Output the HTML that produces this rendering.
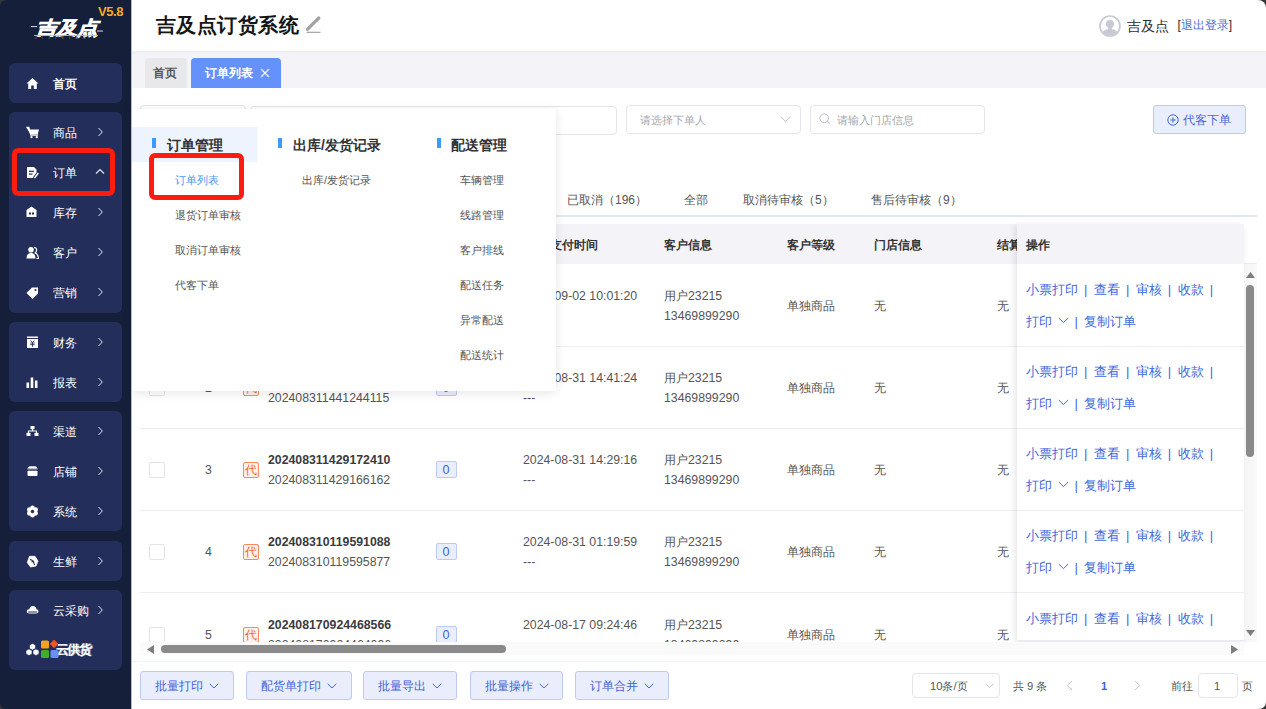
<!DOCTYPE html>
<html><head><meta charset="utf-8">
<style>
*{margin:0;padding:0;box-sizing:border-box}
html,body{width:1266px;height:709px;overflow:hidden;background:#363636}
body{font-family:"Liberation Sans",sans-serif;position:relative;color:#555}
.win{position:absolute;left:0;top:0;width:1266px;height:709px;border-radius:6px 8px 7px 6px;overflow:hidden;background:transparent}
.a{position:absolute;white-space:nowrap}
/* sidebar */
.side{position:absolute;left:0;top:0;width:131px;height:709px;background:#161f3a}
.grp{position:absolute;left:9px;width:113px;background:#232e5b;border-radius:6px}
.stx{font-size:11.8px;line-height:16px;color:#fff;margin-top:1px}
/* header */
.hdr{position:absolute;left:131px;top:0;width:1135px;height:51px;background:#fff}
.tabs{position:absolute;left:131px;top:51px;width:1135px;height:37px;background:#f4f4f8;box-shadow:inset 0 2px 2px rgba(0,0,0,0.025)}
.main{position:absolute;left:131px;top:88px;width:1135px;height:621px;background:#fff}
.inp{position:absolute;height:29px;border:1px solid #e3e5ec;border-radius:4px;background:#fff}
.ph{position:absolute;font-size:10.9px;color:#a6a7ad;line-height:14px}
.btnb{position:absolute;height:29px;border:1px solid #bccaf5;background:#e9edfc;border-radius:3px;color:#4262d6;font-size:12px}
.stab{top:193px;font-size:12px;line-height:14px;color:#555}
.th{top:238px;font-size:12px;line-height:14px;font-weight:bold;color:#333}
.td{font-size:12.3px;line-height:14px;color:#555;margin-top:1px}
.cb{width:16px;height:16px;border:1px solid #e2e4ea;border-radius:2px;background:#fff}
.dai{width:16px;height:16px;border:1px solid #f58a5a;background:#fef1eb;color:#f26a2c;font-size:12px;line-height:14px;text-align:center;border-radius:2px}
.zero{width:21px;height:17px;border:1px solid #bccaf5;background:#e9edfc;color:#3d63dd;font-size:12.5px;line-height:17px;text-align:center;border-radius:2px;padding-right:1px}
.op{font-size:13.4px;line-height:16px;color:#4268dc;margin-top:0.5px}
.op i{font-style:normal;margin:0 6.5px 0 6px;font-size:13px}
.pg{font-size:11.2px;line-height:14px;color:#555}
.ptl{font-size:14px;line-height:16px;font-weight:bold;color:#333;margin-top:1px}
.pit{font-size:10.8px;line-height:14px;color:#555}
</style></head><body>
<div class="win">

<!-- SIDEBAR -->
<div class="side">
  <div class="a" style="left:98px;top:4px;font-size:13px;line-height:15px;font-weight:bold;color:#f7aa1e;letter-spacing:-0.4px">V5.8</div>
  <svg class="a" style="left:30px;top:14px" width="76" height="28" viewBox="0 0 76 28">
    <g transform="translate(0 1.5) matrix(1 0 -0.3 0.86 6 0)">
      <text x="6" y="21" font-size="21" font-weight="bold" fill="#fff" stroke="#fff" stroke-width="1" textLength="62" lengthAdjust="spacingAndGlyphs">吉及点</text>
    </g>
    <rect x="1" y="12" width="6" height="1.1" fill="#c8cbd8"/><rect x="67" y="16.5" width="6" height="1.1" fill="#c8cbd8"/>
    <rect x="4" y="21" width="64" height="0.9" fill="#b5b9c8"/>
    <text x="5" y="24.8" font-size="2.8" fill="#9aa" letter-spacing="5.6">JIJIDIAN</text>
  </svg>
  <div class="grp" style="top:63px;height:40px"></div>
  <svg class="a" style="left:26px;top:77px" width="13" height="13" viewBox="-0.5 -0.5 13 13"><path d="M6 0.5 L12 6 L10.3 6 L10.3 11.5 L7.3 11.5 L7.3 8 L4.7 8 L4.7 11.5 L1.7 11.5 L1.7 6 L0 6 Z" fill="#fff"/></svg>
  <div class="a stx" style="left:52.5px;top:75px;font-weight:bold;">首页</div>
  <div class="grp" style="top:112px;height:201px"></div>
  <svg class="a" style="left:26px;top:126px" width="13" height="13" viewBox="-0.5 -0.5 13 13"><path d="M0 1 L2.3 1 L3.3 3 L12.5 3 L11.2 8 L4 8 Z" fill="#fff"/><path d="M0 1 L2.3 1 L4.4 8.6 L11.5 8.6" fill="none" stroke="#fff" stroke-width="1.3"/><circle cx="5" cy="10.6" r="1.2" fill="#fff"/><circle cx="10.3" cy="10.6" r="1.2" fill="#fff"/></svg>
  <div class="a stx" style="left:52.5px;top:124px;">商品</div>
  <svg class="a" style="left:97px;top:127px" width="7" height="10" viewBox="0 0 7 10"><path d="M1.5 1 L5.3 5 L1.5 9" fill="none" stroke="#e4e6ee" stroke-width="1"/></svg>
  <svg class="a" style="left:26px;top:166px" width="13" height="13" viewBox="-0.5 -0.5 13 13"><path d="M1 0.5 L7.5 0.5 L10 3 L10 6 L7 10 L6.5 11.5 L1 11.5 Q0.5 11.5 0.5 11 L0.5 1 Q0.5 0.5 1 0.5 Z" fill="#fff"/><rect x="2.5" y="4.2" width="5" height="1.2" fill="#222c58"/><rect x="2.5" y="7" width="3.5" height="1.2" fill="#222c58"/><path d="M8 11.5 L11.8 6.5" stroke="#fff" stroke-width="1.5"/></svg>
  <div class="a stx" style="left:52.5px;top:164px;">订单</div>
  <svg class="a" style="left:95px;top:168px" width="10" height="7" viewBox="0 0 10 7"><path d="M1 5.5 L5 1.5 L9 5.5" fill="none" stroke="#e8eaf2" stroke-width="1.1"/></svg>
  <svg class="a" style="left:26px;top:206px" width="13" height="13" viewBox="-0.5 -0.5 13 13"><path d="M5 0 L10 3.5 L10 10.5 L0 10.5 L0 3.5 Z" fill="#fff"/><rect x="2.5" y="6" width="2" height="2" fill="#222c58"/><rect x="5.5" y="6" width="2" height="2" fill="#222c58"/></svg>
  <div class="a stx" style="left:52.5px;top:204px;">库存</div>
  <svg class="a" style="left:97px;top:207px" width="7" height="10" viewBox="0 0 7 10"><path d="M1.5 1 L5.3 5 L1.5 9" fill="none" stroke="#e4e6ee" stroke-width="1"/></svg>
  <svg class="a" style="left:26px;top:246px" width="13" height="13" viewBox="-0.5 -0.5 13 13"><circle cx="4.5" cy="3.2" r="2.8" fill="#fff"/><path d="M0 12 Q0 6.5 4.5 6.5 Q9 6.5 9 12 Z" fill="#fff"/><path d="M7.5 0.8 Q10.5 1.2 10 4.5 Q9.5 6 8.3 6.3 Q11.5 7 12 12 L10 12" fill="none" stroke="#fff" stroke-width="1.2"/></svg>
  <div class="a stx" style="left:52.5px;top:244px;">客户</div>
  <svg class="a" style="left:97px;top:247px" width="7" height="10" viewBox="0 0 7 10"><path d="M1.5 1 L5.3 5 L1.5 9" fill="none" stroke="#e4e6ee" stroke-width="1"/></svg>
  <svg class="a" style="left:26px;top:286px" width="13" height="13" viewBox="-0.5 -0.5 13 13"><path d="M5.5 1 L11.5 1 L11.5 7 L6 12.5 L0 6.5 Z" fill="#fff"/><circle cx="9" cy="3.5" r="1" fill="#222c58"/></svg>
  <div class="a stx" style="left:52.5px;top:284px;">营销</div>
  <svg class="a" style="left:97px;top:287px" width="7" height="10" viewBox="0 0 7 10"><path d="M1.5 1 L5.3 5 L1.5 9" fill="none" stroke="#e4e6ee" stroke-width="1"/></svg>
  <div class="grp" style="top:322px;height:80px"></div>
  <svg class="a" style="left:26px;top:336px" width="13" height="13" viewBox="-0.5 -0.5 13 13"><rect x="0.5" y="0" width="11" height="1.5" fill="#fff"/><rect x="0.5" y="2.5" width="11" height="9" fill="#fff"/><path d="M4.2 4 L6 6 L7.8 4 M3.8 6.5 H8.2 M3.8 8.2 H8.2 M6 6 V10.3" stroke="#222c58" stroke-width="0.9" fill="none"/></svg>
  <div class="a stx" style="left:52.5px;top:334px;">财务</div>
  <svg class="a" style="left:97px;top:337px" width="7" height="10" viewBox="0 0 7 10"><path d="M1.5 1 L5.3 5 L1.5 9" fill="none" stroke="#e4e6ee" stroke-width="1"/></svg>
  <svg class="a" style="left:26px;top:376px" width="13" height="13" viewBox="-0.5 -0.5 13 13"><rect x="0" y="6" width="2.6" height="5.5" fill="#fff"/><rect x="4.2" y="1" width="2.6" height="10.5" fill="#fff"/><rect x="8.4" y="4" width="2.6" height="7.5" fill="#fff"/></svg>
  <div class="a stx" style="left:52.5px;top:374px;">报表</div>
  <svg class="a" style="left:97px;top:377px" width="7" height="10" viewBox="0 0 7 10"><path d="M1.5 1 L5.3 5 L1.5 9" fill="none" stroke="#e4e6ee" stroke-width="1"/></svg>
  <div class="grp" style="top:411px;height:120px"></div>
  <svg class="a" style="left:26px;top:425px" width="13" height="13" viewBox="-0.5 -0.5 13 13"><rect x="4" y="0.5" width="4" height="3.2" fill="#fff"/><path d="M6 3.5 V5.5 M2 7.5 V5.5 H10 V7.5" stroke="#fff" stroke-width="1.2" fill="none"/><rect x="0" y="7.3" width="4" height="3.2" fill="#fff"/><rect x="8" y="7.3" width="4" height="3.2" fill="#fff"/></svg>
  <div class="a stx" style="left:52.5px;top:423px;">渠道</div>
  <svg class="a" style="left:97px;top:426px" width="7" height="10" viewBox="0 0 7 10"><path d="M1.5 1 L5.3 5 L1.5 9" fill="none" stroke="#e4e6ee" stroke-width="1"/></svg>
  <svg class="a" style="left:26px;top:465px" width="13" height="13" viewBox="-0.5 -0.5 13 13"><path d="M1 4.2 Q1 0.8 3.8 0.8 H8.2 Q11 0.8 11 4.2 Z" fill="#fff"/><rect x="1" y="5.3" width="10" height="5.2" rx="0.8" fill="#fff"/><rect x="1" y="3.2" width="10" height="0.9" fill="#232e5b"/></svg>
  <div class="a stx" style="left:52.5px;top:463px;">店铺</div>
  <svg class="a" style="left:97px;top:466px" width="7" height="10" viewBox="0 0 7 10"><path d="M1.5 1 L5.3 5 L1.5 9" fill="none" stroke="#e4e6ee" stroke-width="1"/></svg>
  <svg class="a" style="left:26px;top:505px" width="13" height="13" viewBox="-0.5 -0.5 13 13"><circle cx="9.20" cy="7.85" r="2.3" fill="#fff"/><circle cx="6.00" cy="9.70" r="2.3" fill="#fff"/><circle cx="2.80" cy="7.85" r="2.3" fill="#fff"/><circle cx="2.80" cy="4.15" r="2.3" fill="#fff"/><circle cx="6.00" cy="2.30" r="2.3" fill="#fff"/><circle cx="9.20" cy="4.15" r="2.3" fill="#fff"/><circle cx="6" cy="6" r="3.8" fill="#fff"/><circle cx="6" cy="6" r="1.7" fill="#232e5b"/></svg>
  <div class="a stx" style="left:52.5px;top:503px;">系统</div>
  <svg class="a" style="left:97px;top:506px" width="7" height="10" viewBox="0 0 7 10"><path d="M1.5 1 L5.3 5 L1.5 9" fill="none" stroke="#e4e6ee" stroke-width="1"/></svg>
  <div class="grp" style="top:541px;height:40px"></div>
  <svg class="a" style="left:26px;top:555px" width="13" height="13" viewBox="-0.5 -0.5 13 13"><path d="M3 0.8 L8.5 0.8 L11.5 5.5 L9.5 10.5 L4 11.5 L0.8 7 Z" fill="#fff" stroke="#fff" stroke-width="0.8" stroke-linejoin="round"/><path d="M3.5 4 Q7 4.5 8 9.5 M5 6.5 L7.5 5.5" stroke="#232e5b" stroke-width="1.1" fill="none"/></svg>
  <div class="a stx" style="left:52.5px;top:553px;">生鲜</div>
  <svg class="a" style="left:97px;top:556px" width="7" height="10" viewBox="0 0 7 10"><path d="M1.5 1 L5.3 5 L1.5 9" fill="none" stroke="#e4e6ee" stroke-width="1"/></svg>
  <div class="grp" style="top:590px;height:80px"></div>
  <svg class="a" style="left:26px;top:604px" width="13" height="13" viewBox="-0.5 -0.5 13 13"><path d="M3 9 Q0 9 0.3 6.5 Q0.7 4.5 2.8 4.7 Q3.5 1.5 6.5 1.5 Q9.5 1.7 10 4.7 Q12.3 5 12 7.2 Q11.8 9 9.5 9 Z" fill="#fff"/><rect x="1.5" y="7" width="9" height="1" fill="#222c58"/></svg>
  <div class="a stx" style="left:52.5px;top:602px;">云采购</div>
  <svg class="a" style="left:97px;top:605px" width="7" height="10" viewBox="0 0 7 10"><path d="M1.5 1 L5.3 5 L1.5 9" fill="none" stroke="#e4e6ee" stroke-width="1"/></svg>
  <svg class="a" style="left:25px;top:643px" width="15" height="14" viewBox="0 0 15 14"><g fill="#fff" stroke="#232e5b" stroke-width="0.6"><path d="M7.5 0.5 L10.5 2 L10.5 5.5 L7.5 7 L4.5 5.5 L4.5 2 Z"/><path d="M4 6 L7 7.5 L7 11 L4 12.5 L1 11 L1 7.5 Z"/><path d="M11 6 L14 7.5 L14 11 L11 12.5 L8 11 L8 7.5 Z"/></g></svg>
  <div class="a" style="left:56px;top:642px;font-size:12.5px;line-height:16px;font-weight:bold;color:#fff;letter-spacing:-1.6px">云供货</div>
  <div class="a" style="left:57px;top:642px;font-size:12.5px;line-height:16px;font-weight:bold;color:#fff;opacity:0.55;letter-spacing:-1.6px">云俱货</div>
  <svg class="a" style="left:41px;top:640px" width="18" height="18" viewBox="0 0 18 18"><rect x="0" y="0.5" width="8" height="8" rx="1.5" fill="#f7a21b"/><rect x="10" y="0.8" width="6.2" height="6.2" rx="1" fill="#f2551c" transform="rotate(45 13.1 3.9)"/><rect x="0" y="10" width="8" height="8" rx="1.5" fill="#3fae2a"/><rect x="9.5" y="10" width="8" height="8" rx="1.5" fill="#6b8ef7"/></svg>
  <div class="a" style="left:11.5px;top:148px;width:103px;height:48px;border:5px solid #fd1d10;border-radius:6px"></div>
</div>
<!-- HEADER -->
<div class="hdr"></div>
<div class="a" style="left:155.5px;top:13px;font-size:20.3px;line-height:24px;font-weight:bold;color:#151515;letter-spacing:0.5px">吉及点订货系统</div>

<div class="tabs"></div>
<div class="a" style="left:145px;top:58px;width:42px;height:30px;background:#e8e8ea;border-radius:4px 4px 0 0"></div>
<div class="a" style="left:153px;top:66px;font-size:12px;line-height:14px;font-weight:bold;color:#555">首页</div>
<div class="a" style="left:191px;top:58px;width:90px;height:30px;background:#6591fb;border-radius:4px 4px 0 0"></div>
<div class="a" style="left:205px;top:66px;font-size:12px;line-height:14px;font-weight:bold;color:#fff">订单列表</div>

<div class="main"></div>
<svg class="a" style="left:305px;top:15px" width="17" height="19" viewBox="0 0 17 19"><path d="M2.6 14.2 L10.6 6.2" stroke="#a3a3a3" stroke-width="3.3" stroke-linecap="round"/><path d="M11.8 5 L13.8 3" stroke="#a3a3a3" stroke-width="3.3" stroke-linecap="round"/><path d="M1.5 15.5 L2.6 14.2" stroke="#a3a3a3" stroke-width="1.5"/><rect x="1.5" y="16.7" width="14" height="1.3" fill="#a9a9a9"/></svg>
<svg class="a" style="left:1098.5px;top:15px" width="22" height="22" viewBox="0 0 22 22"><defs><clipPath id="cc"><circle cx="11" cy="11" r="9.5"/></clipPath></defs><circle cx="11" cy="11" r="10" fill="none" stroke="#c7cad5" stroke-width="1.7"/><g clip-path="url(#cc)" fill="#c7cad5"><circle cx="11" cy="9" r="4.1"/><path d="M9.3 12 L12.7 12 L13 14.3 Q19.5 14.8 20 22 L2 22 Q2.5 14.8 9 14.3 Z"/></g></svg>
<div class="a" style="left:1126.5px;top:18px;font-size:14px;line-height:16px;color:#2b2b2b">吉及点</div>
<div class="a" style="left:1177.5px;top:18px;font-size:12px;line-height:14px;color:#2b2b2b">[<span style="color:#4d6fd6">退出登录</span>]</div>
<svg class="a" style="left:260px;top:68px" width="10" height="10" viewBox="0 0 10 10"><path d="M1 1 L9 9 M9 1 L1 9" stroke="#fff" stroke-width="1.1"/></svg>
<div class="inp" style="left:140px;top:105px;width:106px"></div>
<div class="inp" style="left:250px;top:106px;width:367px"></div>
<div class="inp" style="left:626px;top:105px;width:175px"></div>
<div class="ph" style="left:640px;top:113px">请选择下单人</div>
<svg class="a" style="left:780px;top:116px" width="11" height="7" viewBox="0 0 11 7"><path d="M0.8 1 L5.5 5.6 L10.2 1" fill="none" stroke="#c0c4cc" stroke-width="1"/></svg>
<div class="inp" style="left:810px;top:105px;width:175px"></div>
<svg class="a" style="left:819px;top:113px" width="12" height="12" viewBox="0 0 12 12"><circle cx="5.2" cy="5.2" r="4.3" fill="none" stroke="#b8bcc6" stroke-width="1"/><path d="M8.3 8.3 L10.8 10.8" stroke="#b8bcc6" stroke-width="1"/></svg>
<div class="ph" style="left:837px;top:113px">请输入门店信息</div>
<div class="btnb" style="left:1153px;top:105px;width:93px"></div>
<svg class="a" style="left:1167px;top:114px" width="12" height="12" viewBox="0 0 12 12"><circle cx="6" cy="6" r="5.2" fill="none" stroke="#4766d8" stroke-width="1"/><path d="M6 3.3 V8.7 M3.3 6 H8.7" stroke="#4766d8" stroke-width="1"/></svg>
<div class="a" style="left:1183px;top:113px;font-size:12px;line-height:14px;color:#4766d8">代客下单</div>
<div class="a" style="left:140px;top:215px;width:1117px;height:2px;background:#e3e7f0"></div>
<div class="a stab" style="left:567px">已取消（196）</div>
<div class="a stab" style="left:684px">全部</div>
<div class="a stab" style="left:743px">取消待审核（5）</div>
<div class="a stab" style="left:871px">售后待审核（9）</div>
<div class="a" style="left:140px;top:224px;width:1104px;height:40px;background:#f4f4f8"></div>
<div class="a th" style="left:523px">下单/支付时间</div>
<div class="a th" style="left:664px">客户信息</div>
<div class="a th" style="left:787px">客户等级</div>
<div class="a th" style="left:874px">门店信息</div>
<div class="a th" style="left:997px">结算方式</div>
<div class="a" style="left:140px;top:264px;width:1104px;height:378px;overflow:hidden">
<div class="a" style="left:0;top:82px;width:1104px;height:1px;background:#ebeef5"></div>
<div class="a cb" style="left:9px;top:34px"></div>
<div class="a td" style="left:64px;top:34px;width:9px;text-align:center">1</div>
<div class="a dai" style="left:103px;top:34px">代</div>
<div class="a td" style="left:128px;top:24px;font-weight:bold;color:#3b3b3b">202409021001201234</div>
<div class="a td" style="left:128px;top:44px">202409021001205678</div>
<div class="a zero" style="left:296px;top:33px">0</div>
<div class="a td" style="left:383px;top:24px">2024-09-02 10:01:20</div>
<div class="a td" style="left:383px;top:44px">---</div>
<div class="a td" style="left:524px;top:24px">用户23215</div>
<div class="a td" style="left:524px;top:44px">13469899290</div>
<div class="a td" style="left:647px;top:34px">单独商品</div>
<div class="a td" style="left:734px;top:34px">无</div>
<div class="a td" style="left:857px;top:34px">无</div>
<div class="a" style="left:0;top:164px;width:1104px;height:1px;background:#ebeef5"></div>
<div class="a cb" style="left:9px;top:116px"></div>
<div class="a td" style="left:64px;top:116px;width:9px;text-align:center">2</div>
<div class="a dai" style="left:103px;top:116px">代</div>
<div class="a td" style="left:128px;top:106px;font-weight:bold;color:#3b3b3b">202408311441244111</div>
<div class="a td" style="left:128px;top:126px">202408311441244115</div>
<div class="a zero" style="left:296px;top:115px">0</div>
<div class="a td" style="left:383px;top:106px">2024-08-31 14:41:24</div>
<div class="a td" style="left:383px;top:126px">---</div>
<div class="a td" style="left:524px;top:106px">用户23215</div>
<div class="a td" style="left:524px;top:126px">13469899290</div>
<div class="a td" style="left:647px;top:116px">单独商品</div>
<div class="a td" style="left:734px;top:116px">无</div>
<div class="a td" style="left:857px;top:116px">无</div>
<div class="a" style="left:0;top:246px;width:1104px;height:1px;background:#ebeef5"></div>
<div class="a cb" style="left:9px;top:198px"></div>
<div class="a td" style="left:64px;top:198px;width:9px;text-align:center">3</div>
<div class="a dai" style="left:103px;top:198px">代</div>
<div class="a td" style="left:128px;top:188px;font-weight:bold;color:#3b3b3b">202408311429172410</div>
<div class="a td" style="left:128px;top:208px">202408311429166162</div>
<div class="a zero" style="left:296px;top:197px">0</div>
<div class="a td" style="left:383px;top:188px">2024-08-31 14:29:16</div>
<div class="a td" style="left:383px;top:208px">---</div>
<div class="a td" style="left:524px;top:188px">用户23215</div>
<div class="a td" style="left:524px;top:208px">13469899290</div>
<div class="a td" style="left:647px;top:198px">单独商品</div>
<div class="a td" style="left:734px;top:198px">无</div>
<div class="a td" style="left:857px;top:198px">无</div>
<div class="a" style="left:0;top:328px;width:1104px;height:1px;background:#ebeef5"></div>
<div class="a cb" style="left:9px;top:280px"></div>
<div class="a td" style="left:64px;top:280px;width:9px;text-align:center">4</div>
<div class="a dai" style="left:103px;top:280px">代</div>
<div class="a td" style="left:128px;top:270px;font-weight:bold;color:#3b3b3b">202408310119591088</div>
<div class="a td" style="left:128px;top:290px">202408310119595877</div>
<div class="a zero" style="left:296px;top:279px">0</div>
<div class="a td" style="left:383px;top:270px">2024-08-31 01:19:59</div>
<div class="a td" style="left:383px;top:290px">---</div>
<div class="a td" style="left:524px;top:270px">用户23215</div>
<div class="a td" style="left:524px;top:290px">13469899290</div>
<div class="a td" style="left:647px;top:280px">单独商品</div>
<div class="a td" style="left:734px;top:280px">无</div>
<div class="a td" style="left:857px;top:280px">无</div>
<div class="a" style="left:0;top:411px;width:1104px;height:1px;background:#ebeef5"></div>
<div class="a cb" style="left:9px;top:363px"></div>
<div class="a td" style="left:64px;top:363px;width:9px;text-align:center">5</div>
<div class="a dai" style="left:103px;top:363px">代</div>
<div class="a td" style="left:128px;top:353px;font-weight:bold;color:#3b3b3b">202408170924468566</div>
<div class="a td" style="left:128px;top:373px">202408170924464096</div>
<div class="a zero" style="left:296px;top:362px">0</div>
<div class="a td" style="left:383px;top:353px">2024-08-17 09:24:46</div>
<div class="a td" style="left:383px;top:373px">---</div>
<div class="a td" style="left:524px;top:353px">用户23215</div>
<div class="a td" style="left:524px;top:373px">13469899290</div>
<div class="a td" style="left:647px;top:363px">单独商品</div>
<div class="a td" style="left:734px;top:363px">无</div>
<div class="a td" style="left:857px;top:363px">无</div>
</div>
<div class="a" style="left:1017px;top:224px;width:227px;height:417px;background:#fff;box-shadow:-4px 0 6px rgba(0,0,0,0.05), 0 3px 6px rgba(0,0,0,0.07);overflow:hidden;border-bottom:1px solid #e6ebf4">
<div class="a" style="left:0;top:0;width:227px;height:40px;background:#f4f4f8"></div>
<div class="a th" style="left:9px;top:14px">操作</div>
<div class="a" style="left:0;top:122px;width:227px;height:1px;background:#ebeef5"></div>
<div class="a op" style="left:9px;top:57px">小票打印<i>|</i>查看<i>|</i>审核<i>|</i>收款<i>|</i></div>
<div class="a op" style="left:9px;top:89px">打印<svg width="11" height="7" viewBox="0 0 11 7" style="margin:0 0 2px 5.5px"><path d="M0.8 1 L5.5 5.6 L10.2 1" fill="none" stroke="#4268dc" stroke-width="1"/></svg><i>|</i>复制订单</div>
<div class="a" style="left:0;top:204px;width:227px;height:1px;background:#ebeef5"></div>
<div class="a op" style="left:9px;top:139px">小票打印<i>|</i>查看<i>|</i>审核<i>|</i>收款<i>|</i></div>
<div class="a op" style="left:9px;top:171px">打印<svg width="11" height="7" viewBox="0 0 11 7" style="margin:0 0 2px 5.5px"><path d="M0.8 1 L5.5 5.6 L10.2 1" fill="none" stroke="#4268dc" stroke-width="1"/></svg><i>|</i>复制订单</div>
<div class="a" style="left:0;top:286px;width:227px;height:1px;background:#ebeef5"></div>
<div class="a op" style="left:9px;top:221px">小票打印<i>|</i>查看<i>|</i>审核<i>|</i>收款<i>|</i></div>
<div class="a op" style="left:9px;top:253px">打印<svg width="11" height="7" viewBox="0 0 11 7" style="margin:0 0 2px 5.5px"><path d="M0.8 1 L5.5 5.6 L10.2 1" fill="none" stroke="#4268dc" stroke-width="1"/></svg><i>|</i>复制订单</div>
<div class="a" style="left:0;top:368px;width:227px;height:1px;background:#ebeef5"></div>
<div class="a op" style="left:9px;top:303px">小票打印<i>|</i>查看<i>|</i>审核<i>|</i>收款<i>|</i></div>
<div class="a op" style="left:9px;top:335px">打印<svg width="11" height="7" viewBox="0 0 11 7" style="margin:0 0 2px 5.5px"><path d="M0.8 1 L5.5 5.6 L10.2 1" fill="none" stroke="#4268dc" stroke-width="1"/></svg><i>|</i>复制订单</div>
<div class="a" style="left:0;top:451px;width:227px;height:1px;background:#ebeef5"></div>
<div class="a op" style="left:9px;top:386px">小票打印<i>|</i>查看<i>|</i>审核<i>|</i>收款<i>|</i></div>
<div class="a op" style="left:9px;top:418px">打印<svg width="11" height="7" viewBox="0 0 11 7" style="margin:0 0 2px 5.5px"><path d="M0.8 1 L5.5 5.6 L10.2 1" fill="none" stroke="#4268dc" stroke-width="1"/></svg><i>|</i>复制订单</div>
</div>
<div class="a" style="left:1244px;top:264px;width:13px;height:378px;background:linear-gradient(90deg,#f3f3f3,#f7f7f7 40%,#f9f9f9)"></div><div class="a" style="left:1244px;top:263px;width:13px;height:1px;background:#e6eaf2"></div>
<svg class="a" style="left:1246px;top:272px" width="9" height="6" viewBox="0 0 9 6"><path d="M4.5 0 L9 6 L0 6 Z" fill="#7d7d7d"/></svg>
<div class="a" style="left:1246px;top:285px;width:8px;height:172px;background:#8a8a8a;border-radius:4px"></div>
<svg class="a" style="left:1246px;top:630px" width="9" height="6" viewBox="0 0 9 6"><path d="M0 0 L9 0 L4.5 6 Z" fill="#7d7d7d"/></svg>
<div class="a" style="left:140px;top:642px;width:1104px;height:13px;background:#fafafa"></div>
<svg class="a" style="left:147px;top:645px" width="7" height="9" viewBox="0 0 7 9"><path d="M7 0 L7 9 L0 4.5 Z" fill="#7d7d7d"/></svg>
<div class="a" style="left:161px;top:645px;width:345px;height:8px;background:#8a8a8a;border-radius:4px"></div>
<svg class="a" style="left:1231px;top:645px" width="7" height="9" viewBox="0 0 7 9"><path d="M0 0 L7 4.5 L0 9 Z" fill="#7d7d7d"/></svg>
<div class="a" style="left:131px;top:661px;width:1135px;height:1px;background:#f1f2f5"></div>
<div class="btnb" style="left:140px;top:671px;width:94px;height:29px;text-align:center;line-height:27px;padding-top:1px">批量打印<svg width="10" height="6" viewBox="0 0 10 6" style="margin:0 0 1px 6px"><path d="M0.7 0.8 L5 5 L9.3 0.8" fill="none" stroke="#4766d8" stroke-width="1"/></svg></div>
<div class="btnb" style="left:246px;top:671px;width:106px;height:29px;text-align:center;line-height:27px;padding-top:1px">配货单打印<svg width="10" height="6" viewBox="0 0 10 6" style="margin:0 0 1px 6px"><path d="M0.7 0.8 L5 5 L9.3 0.8" fill="none" stroke="#4766d8" stroke-width="1"/></svg></div>
<div class="btnb" style="left:363px;top:671px;width:94px;height:29px;text-align:center;line-height:27px;padding-top:1px">批量导出<svg width="10" height="6" viewBox="0 0 10 6" style="margin:0 0 1px 6px"><path d="M0.7 0.8 L5 5 L9.3 0.8" fill="none" stroke="#4766d8" stroke-width="1"/></svg></div>
<div class="btnb" style="left:470px;top:671px;width:93px;height:29px;text-align:center;line-height:27px;padding-top:1px">批量操作<svg width="10" height="6" viewBox="0 0 10 6" style="margin:0 0 1px 6px"><path d="M0.7 0.8 L5 5 L9.3 0.8" fill="none" stroke="#4766d8" stroke-width="1"/></svg></div>
<div class="btnb" style="left:575px;top:671px;width:94px;height:29px;text-align:center;line-height:27px;padding-top:1px">订单合并<svg width="10" height="6" viewBox="0 0 10 6" style="margin:0 0 1px 6px"><path d="M0.7 0.8 L5 5 L9.3 0.8" fill="none" stroke="#4766d8" stroke-width="1"/></svg></div>
<div class="inp" style="left:912px;top:673px;width:88px;height:25px"></div>
<div class="a pg" style="left:930px;top:679px">10条/页</div>
<svg class="a" style="left:985px;top:683px" width="9" height="6" viewBox="0 0 9 6"><path d="M0.6 0.8 L4.5 4.6 L8.4 0.8" fill="none" stroke="#c0c4cc" stroke-width="1"/></svg>
<div class="a pg" style="left:1013px;top:679px">共 9 条</div>
<svg class="a" style="left:1066px;top:680px" width="7" height="11" viewBox="0 0 7 11"><path d="M6 1 L1.2 5.5 L6 10" fill="none" stroke="#c0c4cc" stroke-width="1"/></svg>
<div class="a pg" style="left:1101px;top:679px;font-weight:bold;color:#3d63dd">1</div>
<svg class="a" style="left:1134px;top:680px" width="7" height="11" viewBox="0 0 7 11"><path d="M1 1 L5.8 5.5 L1 10" fill="none" stroke="#c0c4cc" stroke-width="1"/></svg>
<div class="a pg" style="left:1171px;top:679px">前往</div>
<div class="inp" style="left:1198px;top:673px;width:40px;height:25px"></div>
<div class="a pg" style="left:1214px;top:679px">1</div>
<div class="a pg" style="left:1242px;top:679px">页</div>
<div class="a" style="left:132px;top:109px;width:424px;height:282px;background:#fff;box-shadow:0 2px 10px rgba(0,0,0,0.10)"></div>
<div class="a" style="left:132px;top:127px;width:125px;height:35px;background:#edf4fe"></div>
<div class="a" style="left:152px;top:137.5px;width:4px;height:10.5px;background:#3d9bfb"></div>
<div class="a ptl" style="left:167px;top:136px">订单管理</div>
<div class="a" style="left:278px;top:137.5px;width:4px;height:10.5px;background:#3d9bfb"></div>
<div class="a ptl" style="left:293px;top:136px">出库/发货记录</div>
<div class="a" style="left:436.5px;top:137.5px;width:4px;height:10.5px;background:#3d9bfb"></div>
<div class="a ptl" style="left:451px;top:136px">配送管理</div>
<div class="a pit" style="left:175px;top:173px;color:#4e97f7;">订单列表</div>
<div class="a pit" style="left:175px;top:208px;">退货订单审核</div>
<div class="a pit" style="left:175px;top:243px;">取消订单审核</div>
<div class="a pit" style="left:175px;top:278px;">代客下单</div>
<div class="a pit" style="left:302px;top:173px">出库/发货记录</div>
<div class="a pit" style="left:460px;top:173px">车辆管理</div>
<div class="a pit" style="left:460px;top:208px">线路管理</div>
<div class="a pit" style="left:460px;top:243px">客户排线</div>
<div class="a pit" style="left:460px;top:278px">配送任务</div>
<div class="a pit" style="left:460px;top:313px">异常配送</div>
<div class="a pit" style="left:460px;top:348px">配送统计</div>
<div class="a" style="left:149px;top:153px;width:95px;height:47px;border:5px solid #fd1d10;border-radius:6px"></div>
<div class="a" style="left:131px;top:0;width:1px;height:709px;background:#b9bcc6"></div>
</div>
</body></html>
